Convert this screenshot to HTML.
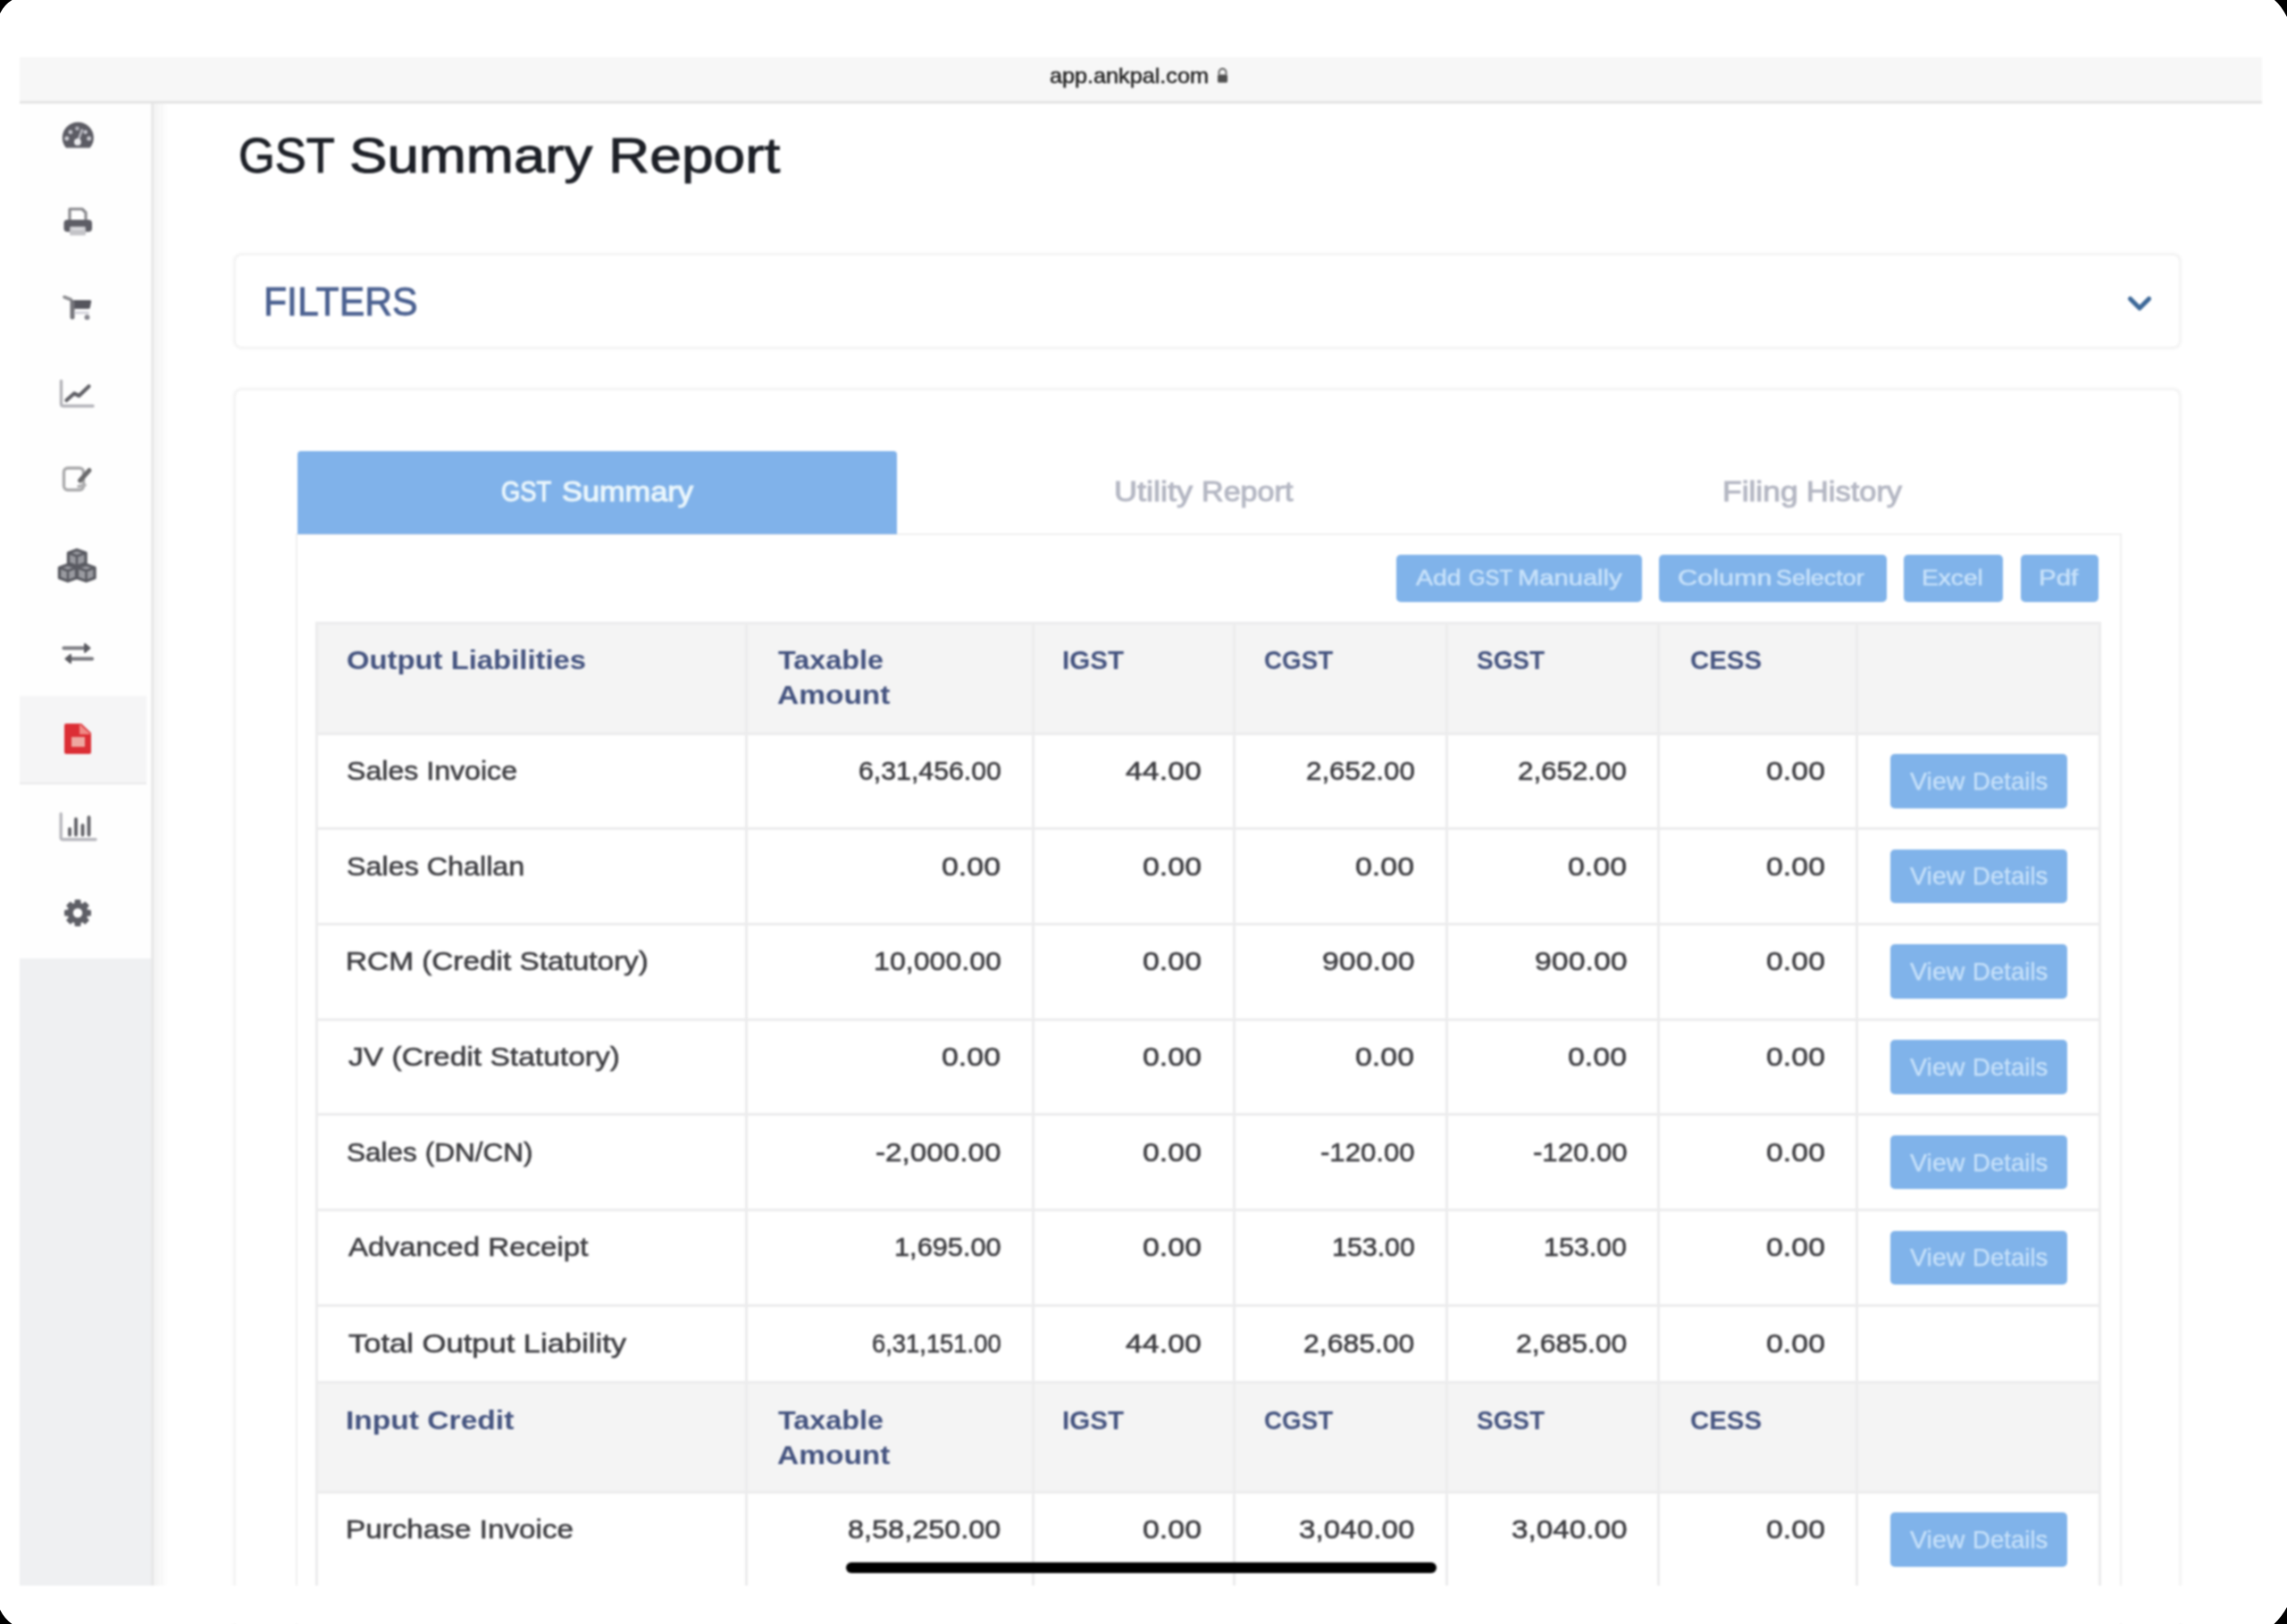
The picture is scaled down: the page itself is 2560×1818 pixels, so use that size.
<!DOCTYPE html>
<html><head><meta charset="utf-8">
<style>
html,body{margin:0;padding:0;}
body{width:2560px;height:1818px;background:#000;position:relative;overflow:hidden;font-family:"Liberation Sans",sans-serif;}
.frame{position:absolute;left:0;top:0;width:2560px;height:1818px;background:#fff;overflow:hidden;}
.wrap{position:absolute;left:0;top:0;width:2560px;height:1818px;filter:blur(1.0px);}
.t{position:absolute;white-space:nowrap;transform-origin:0 0;font-family:"Liberation Sans",sans-serif;}
.bar{position:absolute;left:22px;top:64px;width:2510px;height:49px;background:#f7f7f7;}
.barline{position:absolute;left:22px;top:113px;width:2510px;height:3px;background:#e4e4e4;}
.side{position:absolute;left:22px;top:116px;width:147px;height:1659px;background:#fefefe;}
.sideline{position:absolute;left:168.5px;top:116px;width:4px;height:1659px;background:#e8e8e8;}
.sideshadow{position:absolute;left:172px;top:116px;width:16px;height:1659px;background:linear-gradient(to right,#f2f2f2,rgba(255,255,255,0));}
.sidegray{position:absolute;left:22px;top:1073px;width:147px;height:702px;background:#eff0f2;}
.active{position:absolute;left:22px;top:779px;width:142px;height:97px;background:#f5f5f6;border-bottom:2px solid #e9e9ea;}
.card{position:absolute;background:#fff;border-radius:7px;box-shadow:0 0 3px 2.5px rgba(0,0,0,0.05);}
.tab{position:absolute;left:333px;top:505px;width:671px;height:93px;background:#80b2ea;border-radius:4px 4px 0 0;}
.panel{position:absolute;left:331px;top:597px;width:2040px;height:1300px;border:2.5px solid #f0f0f0;border-top-width:2px;}
.btn{position:absolute;top:621px;height:53px;background:#80b3ea;border-radius:5px;}
.home{position:absolute;left:947px;top:1749px;width:661px;height:12px;background:#000;border-radius:6px;}
svg.ic{position:absolute;}
</style></head><body>
<div class="frame"><div class="wrap">
<div class="bar"></div><div class="barline"></div>
<svg class="ic" style="left:1361px;top:76px" width="15" height="17" viewBox="0 0 15 17"><path d="M3.5 7.5V5a4 4 0 0 1 8 0v2.5" fill="none" stroke="#5a5a5a" stroke-width="1.8"/><rect x="2" y="7.5" width="11" height="9" rx="1.5" fill="#505050"/></svg>
<div class="side"></div>
<div class="sidegray"></div>
<div class="active"></div>
<div class="sideline"></div><div class="sideshadow"></div>
<svg class="ic" style="left:55px;top:125px" width="65" height="50" viewBox="0 0 65 50">
 <path d="M19 40.6 A17.5 17.5 0 1 1 45.6 40.6 Z" fill="#5c5c64"/>
 <circle cx="31.4" cy="18.8" r="2.3" fill="#b4b4bc"/>
 <circle cx="23.9" cy="22.9" r="2.4" fill="#c4c4cc"/>
 <circle cx="40.6" cy="22.8" r="2.4" fill="#c4c4cc"/>
 <circle cx="19.8" cy="30" r="2.5" fill="#c9c9cf"/>
 <circle cx="44.6" cy="30" r="2.5" fill="#c9c9cf"/>
 <path d="M32 33.5 L36.8 20.5" stroke="#b8b8c0" stroke-width="2.6" stroke-linecap="round"/>
 <circle cx="31.9" cy="33.9" r="3.9" fill="#ececee"/>
</svg>
<svg class="ic" style="left:55px;top:220px" width="65" height="50" viewBox="0 0 65 50">
 <path d="M23 27 V14 H37 L41 18 V27" fill="none" stroke="#8a8a8e" stroke-width="3.2" stroke-linejoin="round"/>
 <rect x="16.5" y="26" width="31.5" height="13.5" rx="4" fill="#5d5d65"/>
 <rect x="23" y="33.5" width="18" height="10" rx="1.5" fill="#c4c4c8"/>
 <rect x="25.5" y="35" width="13" height="2.5" fill="#dedee2"/>
</svg>
<svg class="ic" style="left:55px;top:320px" width="65" height="50" viewBox="0 0 65 50">
 <path d="M17 12.5 L24.5 15.5" stroke="#8c8c90" stroke-width="3.6" stroke-linecap="round"/>
 <path d="M24 16 H46 Q47.5 16 47.2 17.5 L45.8 24.5 Q45.5 25.8 44 25.8 H26 Z" fill="#55555d"/>
 <rect x="23.5" y="16" width="5" height="21.5" rx="2.2" fill="#75757b"/>
 <rect x="28" y="28.8" width="16.5" height="2.6" fill="#cfcfd8"/>
 <circle cx="42.5" cy="35.2" r="2.9" fill="#86868e"/>
</svg>
<svg class="ic" style="left:55px;top:415px" width="65" height="50" viewBox="0 0 65 50">
 <path d="M13.5 11.5 V37 Q13.5 39.5 16 39.5 H49" fill="none" stroke="#b3b3b9" stroke-width="3.4" stroke-linecap="round"/>
 <path d="M19.5 33 L28 25.5 L33.5 28 L44.5 17.5" fill="none" stroke="#606066" stroke-width="4.2" stroke-linecap="round" stroke-linejoin="round"/>
</svg>
<svg class="ic" style="left:55px;top:510px" width="65" height="50" viewBox="0 0 65 50">
 <rect x="16.5" y="14" width="22" height="24.5" rx="4.5" fill="none" stroke="#a9a9ab" stroke-width="3.4"/>
 <path d="M45 16.5 L34.5 28" stroke="#6a6a6c" stroke-width="5" stroke-linecap="round"/>
 <path d="M33 34.5 L40 33" stroke="#b0b0b2" stroke-width="3.5" stroke-linecap="round"/>
</svg>
<svg class="ic" style="left:55px;top:605px" width="65" height="50" viewBox="0 0 65 50">
 <g stroke="#5a5b62" stroke-width="3.4" stroke-linejoin="round" fill="#9a9ba1">
  <path d="M21.5 14 L31 10.5 L41 14 L41 25.5 L31 29 L21.5 25.5 Z"/>
  <path d="M11.5 30.5 L21 27 L30.5 30.5 L30.5 42 L21 45.5 L11.5 42 Z"/>
  <path d="M31.5 30.5 L41.5 27 L51 30.5 L51 42 L41.5 45.5 L31.5 42 Z"/>
 </g>
 <g stroke="#5a5b62" stroke-width="2.6" fill="none">
  <path d="M21.5 14 L31 17.5 L41 14 M31 17.5 V29"/>
  <path d="M11.5 30.5 L21 34 L30.5 30.5 M21 34 V45.5"/>
  <path d="M31.5 30.5 L41.5 34 L51 30.5 M41.5 34 V45.5"/>
 </g>
</svg>
<svg class="ic" style="left:55px;top:705px" width="65" height="50" viewBox="0 0 65 50">
 <path d="M16.5 20.5 H43" stroke="#7c7c82" stroke-width="4.2" stroke-linecap="round"/>
 <path d="M40 16 L45.5 20.5 L40 25 Z" fill="#5a5a60" stroke="#5a5a60" stroke-width="2" stroke-linejoin="round"/>
 <path d="M21 32.5 H48" stroke="#77777d" stroke-width="4.2" stroke-linecap="round"/>
 <path d="M24 28 L18.5 32.5 L24 37 Z" fill="#5a5a60" stroke="#5a5a60" stroke-width="2" stroke-linejoin="round"/>
</svg>
<svg class="ic" style="left:55px;top:800px" width="65" height="50" viewBox="0 0 65 50">
 <path d="M19 10 H36 L47 20.5 V42 Q47 44 45 44 H19 Q17 44 17 42 V12 Q17 10 19 10 Z" fill="#dc2e35"/>
 <path d="M34 10.5 V22 H46.5" fill="#f08a86"/>
 <rect x="25" y="25" width="15" height="11" fill="#eea7a0"/>
</svg>
<svg class="ic" style="left:55px;top:900px" width="65" height="50" viewBox="0 0 65 50">
 <path d="M13.2 11 V37.5 Q13.2 39.8 15.5 39.8 H52" fill="none" stroke="#b6b6bc" stroke-width="3.4" stroke-linecap="round"/>
 <path d="M23 28 V34.5 M30 17 V34.5 M37.5 24 V34.5 M44.5 15 V34.5" stroke="#606066" stroke-width="3.8" stroke-linecap="round"/>
</svg>
<svg class="ic" style="left:55px;top:997px" width="65" height="50" viewBox="0 0 65 50">
 <g transform="translate(32,25)" fill="#5e5f66">
  <circle r="11.5"/>
  <rect x="-3.5" y="-15" width="7" height="30" rx="1.5"/>
  <rect x="-3.5" y="-15" width="7" height="30" rx="1.5" transform="rotate(45)"/>
  <rect x="-3.5" y="-15" width="7" height="30" rx="1.5" transform="rotate(90)"/>
  <rect x="-3.5" y="-15" width="7" height="30" rx="1.5" transform="rotate(135)"/>
  <circle r="5.2" fill="#fdfdfd"/>
 </g>
</svg>

<div class="card" style="left:264px;top:286px;width:2175px;height:102px;"></div>
<svg class="ic" style="left:2380px;top:330px" width="30" height="20" viewBox="0 0 30 20"><path d="M4.5 4.5 L15 15 L25.5 4.5" fill="none" stroke="#3d6898" stroke-width="5.2" stroke-linecap="round" stroke-linejoin="round"/></svg>
<div class="card" style="left:264px;top:437px;width:2175px;height:1500px;"></div>
<div class="panel"></div>
<div class="tab"></div>
<div class="btn" style="left:1563px;width:275px"></div>
<div class="btn" style="left:1857px;width:255px"></div>
<div class="btn" style="left:2131px;width:111px"></div>
<div class="btn" style="left:2262px;width:87px"></div>
<div style='position:absolute;left:354px;top:697px;width:1996px;height:124px;background:#f4f4f4'></div>
<div style='position:absolute;left:354px;top:1547.5px;width:1996px;height:122.5px;background:#f4f4f4'></div>
<div style='position:absolute;left:354px;top:695.5px;width:1997.5px;height:3.0px;background:#ececed'></div>
<div style='position:absolute;left:354px;top:819.5px;width:1997.5px;height:3.0px;background:#ececed'></div>
<div style='position:absolute;left:354px;top:926.0px;width:1997.5px;height:3.0px;background:#ececed'></div>
<div style='position:absolute;left:354px;top:1032.7px;width:1997.5px;height:3.0px;background:#ececed'></div>
<div style='position:absolute;left:354px;top:1139.5px;width:1997.5px;height:3.0px;background:#ececed'></div>
<div style='position:absolute;left:354px;top:1246.1px;width:1997.5px;height:3.0px;background:#ececed'></div>
<div style='position:absolute;left:354px;top:1352.8px;width:1997.5px;height:3.0px;background:#ececed'></div>
<div style='position:absolute;left:354px;top:1460.0px;width:1997.5px;height:3.0px;background:#ececed'></div>
<div style='position:absolute;left:354px;top:1546.0px;width:1997.5px;height:3.0px;background:#ececed'></div>
<div style='position:absolute;left:354px;top:1668.5px;width:1997.5px;height:3.0px;background:#ececed'></div>
<div style='position:absolute;left:352.5px;top:695.5px;width:3.0px;height:1080.5px;background:#ececed'></div>
<div style='position:absolute;left:834.0px;top:695.5px;width:3.0px;height:1080.5px;background:#ececed'></div>
<div style='position:absolute;left:1154.5px;top:695.5px;width:3.0px;height:1080.5px;background:#ececed'></div>
<div style='position:absolute;left:1379.5px;top:695.5px;width:3.0px;height:1080.5px;background:#ececed'></div>
<div style='position:absolute;left:1617.5px;top:695.5px;width:3.0px;height:1080.5px;background:#ececed'></div>
<div style='position:absolute;left:1855.0px;top:695.5px;width:3.0px;height:1080.5px;background:#ececed'></div>
<div style='position:absolute;left:2077.2px;top:695.5px;width:3.0px;height:1080.5px;background:#ececed'></div>
<div style='position:absolute;left:2348.5px;top:695.5px;width:3.0px;height:1080.5px;background:#ececed'></div>
<div style='position:absolute;left:2116px;top:844.2px;width:198px;height:60.5px;background:#80b3ea;border-radius:5px'></div>
<div style='position:absolute;left:2116px;top:950.7px;width:198px;height:60.5px;background:#80b3ea;border-radius:5px'></div>
<div style='position:absolute;left:2116px;top:1057.4px;width:198px;height:60.5px;background:#80b3ea;border-radius:5px'></div>
<div style='position:absolute;left:2116px;top:1164.2px;width:198px;height:60.5px;background:#80b3ea;border-radius:5px'></div>
<div style='position:absolute;left:2116px;top:1270.8px;width:198px;height:60.5px;background:#80b3ea;border-radius:5px'></div>
<div style='position:absolute;left:2116px;top:1377.5px;width:198px;height:60.5px;background:#80b3ea;border-radius:5px'></div>
<div style='position:absolute;left:2116px;top:1693.2px;width:198px;height:60.5px;background:#80b3ea;border-radius:5px'></div>
<div class='t' style='left:1174.55px;top:72.80px;font-size:24px;line-height:24px;font-weight:400;color:#222222;-webkit-text-stroke:0.5px #222222;transform:scaleX(1.0503)'>app.ankpal.com</div>
<div class='t' style='left:266.58px;top:146.60px;font-size:54.7px;line-height:54.7px;font-weight:400;color:#1d2027;-webkit-text-stroke:1.0px #1d2027;transform:scaleX(0.9591)'>GST</div>
<div class='t' style='left:390.67px;top:146.60px;font-size:54.7px;line-height:54.7px;font-weight:400;color:#1d2027;-webkit-text-stroke:1.0px #1d2027;transform:scaleX(1.1638)'>Summary</div>
<div class='t' style='left:681.31px;top:146.60px;font-size:54.7px;line-height:54.7px;font-weight:400;color:#1d2027;-webkit-text-stroke:1.0px #1d2027;transform:scaleX(1.1719)'>Report</div>
<div class='t' style='left:294.84px;top:315.40px;font-size:44.8px;line-height:44.8px;font-weight:400;color:#4b6191;-webkit-text-stroke:0.9px #4b6191;transform:scaleX(0.9540)'>FILTERS</div>
<div class='t' style='left:560.65px;top:534.00px;font-size:32px;line-height:32px;font-weight:400;color:#eaf6fc;-webkit-text-stroke:1.2px #eaf6fc;transform:scaleX(0.8538)'>GST</div>
<div class='t' style='left:628.63px;top:534.00px;font-size:32px;line-height:32px;font-weight:400;color:#eaf6fc;-webkit-text-stroke:1.2px #eaf6fc;transform:scaleX(1.0730)'>Summary</div>
<div class='t' style='left:1247.15px;top:534.00px;font-size:32px;line-height:32px;font-weight:400;color:#b4b7c3;-webkit-text-stroke:1.0px #b4b7c3;transform:scaleX(1.1247)'>Utility</div>
<div class='t' style='left:1345.37px;top:534.00px;font-size:32px;line-height:32px;font-weight:400;color:#b4b7c3;-webkit-text-stroke:1.0px #b4b7c3;transform:scaleX(1.0663)'>Report</div>
<div class='t' style='left:1928.29px;top:534.00px;font-size:32px;line-height:32px;font-weight:400;color:#b4b7c3;-webkit-text-stroke:1.0px #b4b7c3;transform:scaleX(1.1068)'>Filing</div>
<div class='t' style='left:2021.75px;top:534.00px;font-size:32px;line-height:32px;font-weight:400;color:#b4b7c3;-webkit-text-stroke:1.0px #b4b7c3;transform:scaleX(1.0755)'>History</div>
<div class='t' style='left:1585.00px;top:635.30px;font-size:24.7px;line-height:24.7px;font-weight:400;color:#c8e2fa;-webkit-text-stroke:0.5px #c8e2fa;transform:scaleX(1.1512)'>Add</div>
<div class='t' style='left:1643.63px;top:635.30px;font-size:24.7px;line-height:24.7px;font-weight:400;color:#c8e2fa;-webkit-text-stroke:0.5px #c8e2fa;transform:scaleX(0.9660)'>GST</div>
<div class='t' style='left:1698.64px;top:635.30px;font-size:24.7px;line-height:24.7px;font-weight:400;color:#c8e2fa;-webkit-text-stroke:0.5px #c8e2fa;transform:scaleX(1.1804)'>Manually</div>
<div class='t' style='left:1877.76px;top:635.30px;font-size:24.7px;line-height:24.7px;font-weight:400;color:#c8e2fa;-webkit-text-stroke:0.5px #c8e2fa;transform:scaleX(1.2410)'>Column</div>
<div class='t' style='left:1987.91px;top:635.30px;font-size:24.7px;line-height:24.7px;font-weight:400;color:#c8e2fa;-webkit-text-stroke:0.5px #c8e2fa;transform:scaleX(1.0889)'>Selector</div>
<div class='t' style='left:2150.72px;top:635.30px;font-size:24.7px;line-height:24.7px;font-weight:400;color:#c8e2fa;-webkit-text-stroke:0.5px #c8e2fa;transform:scaleX(1.1404)'>Excel</div>
<div class='t' style='left:2281.61px;top:635.30px;font-size:24.7px;line-height:24.7px;font-weight:400;color:#c8e2fa;-webkit-text-stroke:0.5px #c8e2fa;transform:scaleX(1.1944)'>Pdf</div>
<div class='t' style='left:388.40px;top:724.00px;font-size:29.8px;line-height:29.8px;font-weight:700;color:#44537f;transform:scaleX(1.1017)'>Output Liabilities</div>
<div class='t' style='left:870.80px;top:724.00px;font-size:29.8px;line-height:29.8px;font-weight:700;color:#44537f;transform:scaleX(1.0852)'>Taxable</div>
<div class='t' style='left:869.68px;top:763.00px;font-size:29.8px;line-height:29.8px;font-weight:700;color:#44537f;transform:scaleX(1.1234)'>Amount</div>
<div class='t' style='left:1188.51px;top:724.00px;font-size:29.8px;line-height:29.8px;font-weight:700;color:#44537f;transform:scaleX(0.9925)'>IGST</div>
<div class='t' style='left:1414.67px;top:724.00px;font-size:29.8px;line-height:29.8px;font-weight:700;color:#44537f;transform:scaleX(0.9317)'>CGST</div>
<div class='t' style='left:1652.76px;top:724.00px;font-size:29.8px;line-height:29.8px;font-weight:700;color:#44537f;transform:scaleX(0.9375)'>SGST</div>
<div class='t' style='left:1891.51px;top:724.00px;font-size:29.8px;line-height:29.8px;font-weight:700;color:#44537f;transform:scaleX(0.9873)'>CESS</div>
<div class='t' style='left:388.43px;top:848.00px;font-size:30px;line-height:30px;font-weight:400;color:#3e3e42;-webkit-text-stroke:0.6px #3e3e42;transform:scaleX(1.0706)'>Sales Invoice</div>
<div class='t' style='left:960.62px;top:848.00px;font-size:30px;line-height:30px;font-weight:400;color:#3e3e42;-webkit-text-stroke:0.6px #3e3e42;transform:scaleX(1.0088)'>6,31,456.00</div>
<div class='t' style='left:1260.25px;top:848.00px;font-size:30px;line-height:30px;font-weight:400;color:#3e3e42;-webkit-text-stroke:0.6px #3e3e42;transform:scaleX(1.1300)'>44.00</div>
<div class='t' style='left:1461.97px;top:848.00px;font-size:30px;line-height:30px;font-weight:400;color:#3e3e42;-webkit-text-stroke:0.6px #3e3e42;transform:scaleX(1.0433)'>2,652.00</div>
<div class='t' style='left:1699.47px;top:848.00px;font-size:30px;line-height:30px;font-weight:400;color:#3e3e42;-webkit-text-stroke:0.6px #3e3e42;transform:scaleX(1.0433)'>2,652.00</div>
<div class='t' style='left:1977.16px;top:848.00px;font-size:30px;line-height:30px;font-weight:400;color:#3e3e42;-webkit-text-stroke:0.6px #3e3e42;transform:scaleX(1.1300)'>0.00</div>
<div class='t' style='left:2137.90px;top:860.90px;font-size:27.6px;line-height:27.6px;font-weight:400;color:#c8e2fa;-webkit-text-stroke:0.25px #c8e2fa;transform:scaleX(1.0350)'>View</div>
<div class='t' style='left:2208.00px;top:860.90px;font-size:27.6px;line-height:27.6px;font-weight:400;color:#c8e2fa;-webkit-text-stroke:0.25px #c8e2fa;transform:scaleX(1.0000)'>Details</div>
<div class='t' style='left:388.42px;top:954.50px;font-size:30px;line-height:30px;font-weight:400;color:#3e3e42;-webkit-text-stroke:0.6px #3e3e42;transform:scaleX(1.0765)'>Sales Challan</div>
<div class='t' style='left:1054.46px;top:954.50px;font-size:30px;line-height:30px;font-weight:400;color:#3e3e42;-webkit-text-stroke:0.6px #3e3e42;transform:scaleX(1.1300)'>0.00</div>
<div class='t' style='left:1279.46px;top:954.50px;font-size:30px;line-height:30px;font-weight:400;color:#3e3e42;-webkit-text-stroke:0.6px #3e3e42;transform:scaleX(1.1300)'>0.00</div>
<div class='t' style='left:1517.46px;top:954.50px;font-size:30px;line-height:30px;font-weight:400;color:#3e3e42;-webkit-text-stroke:0.6px #3e3e42;transform:scaleX(1.1300)'>0.00</div>
<div class='t' style='left:1754.96px;top:954.50px;font-size:30px;line-height:30px;font-weight:400;color:#3e3e42;-webkit-text-stroke:0.6px #3e3e42;transform:scaleX(1.1300)'>0.00</div>
<div class='t' style='left:1977.16px;top:954.50px;font-size:30px;line-height:30px;font-weight:400;color:#3e3e42;-webkit-text-stroke:0.6px #3e3e42;transform:scaleX(1.1300)'>0.00</div>
<div class='t' style='left:2137.90px;top:967.40px;font-size:27.6px;line-height:27.6px;font-weight:400;color:#c8e2fa;-webkit-text-stroke:0.25px #c8e2fa;transform:scaleX(1.0350)'>View</div>
<div class='t' style='left:2208.00px;top:967.40px;font-size:27.6px;line-height:27.6px;font-weight:400;color:#c8e2fa;-webkit-text-stroke:0.25px #c8e2fa;transform:scaleX(1.0000)'>Details</div>
<div class='t' style='left:387.28px;top:1061.20px;font-size:30px;line-height:30px;font-weight:400;color:#3e3e42;-webkit-text-stroke:0.6px #3e3e42;transform:scaleX(1.1109)'>RCM (Credit Statutory)</div>
<div class='t' style='left:977.50px;top:1061.20px;font-size:30px;line-height:30px;font-weight:400;color:#3e3e42;-webkit-text-stroke:0.6px #3e3e42;transform:scaleX(1.0714)'>10,000.00</div>
<div class='t' style='left:1279.46px;top:1061.20px;font-size:30px;line-height:30px;font-weight:400;color:#3e3e42;-webkit-text-stroke:0.6px #3e3e42;transform:scaleX(1.1300)'>0.00</div>
<div class='t' style='left:1480.17px;top:1061.20px;font-size:30px;line-height:30px;font-weight:400;color:#3e3e42;-webkit-text-stroke:0.6px #3e3e42;transform:scaleX(1.1300)'>900.00</div>
<div class='t' style='left:1717.67px;top:1061.20px;font-size:30px;line-height:30px;font-weight:400;color:#3e3e42;-webkit-text-stroke:0.6px #3e3e42;transform:scaleX(1.1300)'>900.00</div>
<div class='t' style='left:1977.16px;top:1061.20px;font-size:30px;line-height:30px;font-weight:400;color:#3e3e42;-webkit-text-stroke:0.6px #3e3e42;transform:scaleX(1.1300)'>0.00</div>
<div class='t' style='left:2137.90px;top:1074.10px;font-size:27.6px;line-height:27.6px;font-weight:400;color:#c8e2fa;-webkit-text-stroke:0.25px #c8e2fa;transform:scaleX(1.0350)'>View</div>
<div class='t' style='left:2208.00px;top:1074.10px;font-size:27.6px;line-height:27.6px;font-weight:400;color:#c8e2fa;-webkit-text-stroke:0.25px #c8e2fa;transform:scaleX(1.0000)'>Details</div>
<div class='t' style='left:389.50px;top:1168.00px;font-size:30px;line-height:30px;font-weight:400;color:#3e3e42;-webkit-text-stroke:0.6px #3e3e42;transform:scaleX(1.1185)'>JV (Credit Statutory)</div>
<div class='t' style='left:1054.46px;top:1168.00px;font-size:30px;line-height:30px;font-weight:400;color:#3e3e42;-webkit-text-stroke:0.6px #3e3e42;transform:scaleX(1.1300)'>0.00</div>
<div class='t' style='left:1279.46px;top:1168.00px;font-size:30px;line-height:30px;font-weight:400;color:#3e3e42;-webkit-text-stroke:0.6px #3e3e42;transform:scaleX(1.1300)'>0.00</div>
<div class='t' style='left:1517.46px;top:1168.00px;font-size:30px;line-height:30px;font-weight:400;color:#3e3e42;-webkit-text-stroke:0.6px #3e3e42;transform:scaleX(1.1300)'>0.00</div>
<div class='t' style='left:1754.96px;top:1168.00px;font-size:30px;line-height:30px;font-weight:400;color:#3e3e42;-webkit-text-stroke:0.6px #3e3e42;transform:scaleX(1.1300)'>0.00</div>
<div class='t' style='left:1977.16px;top:1168.00px;font-size:30px;line-height:30px;font-weight:400;color:#3e3e42;-webkit-text-stroke:0.6px #3e3e42;transform:scaleX(1.1300)'>0.00</div>
<div class='t' style='left:2137.90px;top:1180.90px;font-size:27.6px;line-height:27.6px;font-weight:400;color:#c8e2fa;-webkit-text-stroke:0.25px #c8e2fa;transform:scaleX(1.0350)'>View</div>
<div class='t' style='left:2208.00px;top:1180.90px;font-size:27.6px;line-height:27.6px;font-weight:400;color:#c8e2fa;-webkit-text-stroke:0.25px #c8e2fa;transform:scaleX(1.0000)'>Details</div>
<div class='t' style='left:388.45px;top:1274.60px;font-size:30px;line-height:30px;font-weight:400;color:#3e3e42;-webkit-text-stroke:0.6px #3e3e42;transform:scaleX(1.0510)'>Sales (DN/CN)</div>
<div class='t' style='left:980.35px;top:1274.60px;font-size:30px;line-height:30px;font-weight:400;color:#3e3e42;-webkit-text-stroke:0.6px #3e3e42;transform:scaleX(1.1083)'>-2,000.00</div>
<div class='t' style='left:1279.46px;top:1274.60px;font-size:30px;line-height:30px;font-weight:400;color:#3e3e42;-webkit-text-stroke:0.6px #3e3e42;transform:scaleX(1.1300)'>0.00</div>
<div class='t' style='left:1478.16px;top:1274.60px;font-size:30px;line-height:30px;font-weight:400;color:#3e3e42;-webkit-text-stroke:0.6px #3e3e42;transform:scaleX(1.0380)'>-120.00</div>
<div class='t' style='left:1715.66px;top:1274.60px;font-size:30px;line-height:30px;font-weight:400;color:#3e3e42;-webkit-text-stroke:0.6px #3e3e42;transform:scaleX(1.0380)'>-120.00</div>
<div class='t' style='left:1977.16px;top:1274.60px;font-size:30px;line-height:30px;font-weight:400;color:#3e3e42;-webkit-text-stroke:0.6px #3e3e42;transform:scaleX(1.1300)'>0.00</div>
<div class='t' style='left:2137.90px;top:1287.50px;font-size:27.6px;line-height:27.6px;font-weight:400;color:#c8e2fa;-webkit-text-stroke:0.25px #c8e2fa;transform:scaleX(1.0350)'>View</div>
<div class='t' style='left:2208.00px;top:1287.50px;font-size:27.6px;line-height:27.6px;font-weight:400;color:#c8e2fa;-webkit-text-stroke:0.25px #c8e2fa;transform:scaleX(1.0000)'>Details</div>
<div class='t' style='left:389.50px;top:1381.30px;font-size:30px;line-height:30px;font-weight:400;color:#3e3e42;-webkit-text-stroke:0.6px #3e3e42;transform:scaleX(1.1025)'>Advanced Receipt</div>
<div class='t' style='left:1001.10px;top:1381.30px;font-size:30px;line-height:30px;font-weight:400;color:#3e3e42;-webkit-text-stroke:0.6px #3e3e42;transform:scaleX(1.0250)'>1,695.00</div>
<div class='t' style='left:1279.46px;top:1381.30px;font-size:30px;line-height:30px;font-weight:400;color:#3e3e42;-webkit-text-stroke:0.6px #3e3e42;transform:scaleX(1.1300)'>0.00</div>
<div class='t' style='left:1490.91px;top:1381.30px;font-size:30px;line-height:30px;font-weight:400;color:#3e3e42;-webkit-text-stroke:0.6px #3e3e42;transform:scaleX(1.0120)'>153.00</div>
<div class='t' style='left:1728.41px;top:1381.30px;font-size:30px;line-height:30px;font-weight:400;color:#3e3e42;-webkit-text-stroke:0.6px #3e3e42;transform:scaleX(1.0120)'>153.00</div>
<div class='t' style='left:1977.16px;top:1381.30px;font-size:30px;line-height:30px;font-weight:400;color:#3e3e42;-webkit-text-stroke:0.6px #3e3e42;transform:scaleX(1.1300)'>0.00</div>
<div class='t' style='left:2137.90px;top:1394.20px;font-size:27.6px;line-height:27.6px;font-weight:400;color:#c8e2fa;-webkit-text-stroke:0.25px #c8e2fa;transform:scaleX(1.0350)'>View</div>
<div class='t' style='left:2208.00px;top:1394.20px;font-size:27.6px;line-height:27.6px;font-weight:400;color:#c8e2fa;-webkit-text-stroke:0.25px #c8e2fa;transform:scaleX(1.0000)'>Details</div>
<div class='t' style='left:389.50px;top:1488.50px;font-size:30px;line-height:30px;font-weight:400;color:#3e3e42;-webkit-text-stroke:0.6px #3e3e42;transform:scaleX(1.1513)'>Total Output Liability</div>
<div class='t' style='left:975.83px;top:1488.50px;font-size:30px;line-height:30px;font-weight:400;color:#3e3e42;-webkit-text-stroke:0.6px #3e3e42;transform:scaleX(0.9125)'>6,31,151.00</div>
<div class='t' style='left:1260.25px;top:1488.50px;font-size:30px;line-height:30px;font-weight:400;color:#3e3e42;-webkit-text-stroke:0.6px #3e3e42;transform:scaleX(1.1300)'>44.00</div>
<div class='t' style='left:1459.46px;top:1488.50px;font-size:30px;line-height:30px;font-weight:400;color:#3e3e42;-webkit-text-stroke:0.6px #3e3e42;transform:scaleX(1.0650)'>2,685.00</div>
<div class='t' style='left:1696.96px;top:1488.50px;font-size:30px;line-height:30px;font-weight:400;color:#3e3e42;-webkit-text-stroke:0.6px #3e3e42;transform:scaleX(1.0650)'>2,685.00</div>
<div class='t' style='left:1977.16px;top:1488.50px;font-size:30px;line-height:30px;font-weight:400;color:#3e3e42;-webkit-text-stroke:0.6px #3e3e42;transform:scaleX(1.1300)'>0.00</div>
<div class='t' style='left:387.25px;top:1574.50px;font-size:29.8px;line-height:29.8px;font-weight:700;color:#44537f;transform:scaleX(1.1267)'>Input Credit</div>
<div class='t' style='left:870.80px;top:1574.50px;font-size:29.8px;line-height:29.8px;font-weight:700;color:#44537f;transform:scaleX(1.0852)'>Taxable</div>
<div class='t' style='left:869.68px;top:1613.50px;font-size:29.8px;line-height:29.8px;font-weight:700;color:#44537f;transform:scaleX(1.1234)'>Amount</div>
<div class='t' style='left:1188.51px;top:1574.50px;font-size:29.8px;line-height:29.8px;font-weight:700;color:#44537f;transform:scaleX(0.9925)'>IGST</div>
<div class='t' style='left:1414.67px;top:1574.50px;font-size:29.8px;line-height:29.8px;font-weight:700;color:#44537f;transform:scaleX(0.9317)'>CGST</div>
<div class='t' style='left:1652.76px;top:1574.50px;font-size:29.8px;line-height:29.8px;font-weight:700;color:#44537f;transform:scaleX(0.9375)'>SGST</div>
<div class='t' style='left:1891.51px;top:1574.50px;font-size:29.8px;line-height:29.8px;font-weight:700;color:#44537f;transform:scaleX(0.9873)'>CESS</div>
<div class='t' style='left:387.28px;top:1697.00px;font-size:30px;line-height:30px;font-weight:400;color:#3e3e42;-webkit-text-stroke:0.6px #3e3e42;transform:scaleX(1.1084)'>Purchase Invoice</div>
<div class='t' style='left:949.16px;top:1697.00px;font-size:30px;line-height:30px;font-weight:400;color:#3e3e42;-webkit-text-stroke:0.6px #3e3e42;transform:scaleX(1.0813)'>8,58,250.00</div>
<div class='t' style='left:1279.46px;top:1697.00px;font-size:30px;line-height:30px;font-weight:400;color:#3e3e42;-webkit-text-stroke:0.6px #3e3e42;transform:scaleX(1.1300)'>0.00</div>
<div class='t' style='left:1454.43px;top:1697.00px;font-size:30px;line-height:30px;font-weight:400;color:#3e3e42;-webkit-text-stroke:0.6px #3e3e42;transform:scaleX(1.1083)'>3,040.00</div>
<div class='t' style='left:1691.93px;top:1697.00px;font-size:30px;line-height:30px;font-weight:400;color:#3e3e42;-webkit-text-stroke:0.6px #3e3e42;transform:scaleX(1.1083)'>3,040.00</div>
<div class='t' style='left:1977.16px;top:1697.00px;font-size:30px;line-height:30px;font-weight:400;color:#3e3e42;-webkit-text-stroke:0.6px #3e3e42;transform:scaleX(1.1300)'>0.00</div>
<div class='t' style='left:2137.90px;top:1709.90px;font-size:27.6px;line-height:27.6px;font-weight:400;color:#c8e2fa;-webkit-text-stroke:0.25px #c8e2fa;transform:scaleX(1.0350)'>View</div>
<div class='t' style='left:2208.00px;top:1709.90px;font-size:27.6px;line-height:27.6px;font-weight:400;color:#c8e2fa;-webkit-text-stroke:0.25px #c8e2fa;transform:scaleX(1.0000)'>Details</div>
<div style="position:absolute;left:0;top:1775px;width:2560px;height:43px;background:#fff"></div>
<div class="home"></div>
</div>
<svg style="position:absolute;left:0;top:0" width="2560" height="1818" viewBox="0 0 2560 1818">
<path d="M0 0 H13.5 Q5 5 0 15 Z" fill="#000"/>
<path d="M2560 0 H2546 Q2554 7 2560 19 Z" fill="#000"/>
<path d="M0 1818 H13.5 Q5 1812 0 1802 Z" fill="#000"/>
<path d="M2560 1818 H2545.5 Q2554 1810 2560 1799 Z" fill="#000"/>
</svg>
</div>
</body></html>
